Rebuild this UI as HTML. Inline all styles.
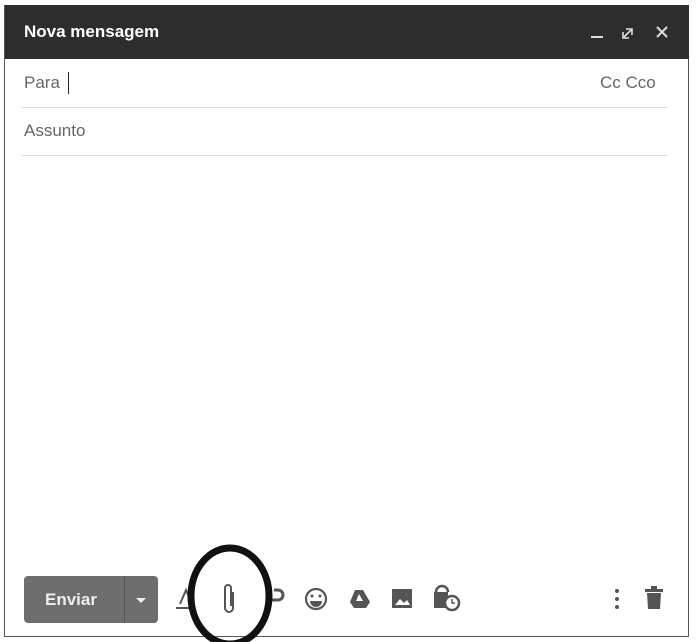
<!DOCTYPE html>
<html><head><style>
body{margin:0;width:699px;height:642px;background:#fff;position:relative;overflow:hidden;font-family:"Liberation Sans",Arial,sans-serif}
.box{position:absolute;left:4px;top:5px;width:685px;height:632px;border:1px solid #555;box-sizing:border-box}
.hdr{position:absolute;left:5px;top:5px;width:684px;height:54px;background:#2d2d2d}
.t{position:absolute;color:#fff;font-weight:bold;font-size:17px;left:24px;top:22px}
.g{position:absolute;color:#666;font-size:17px}
.line{position:absolute;left:22px;width:646px;height:1px;background:#ddd}
.btn{position:absolute;left:24px;top:576px;width:134px;height:47px;background:#6e6e6e;border-radius:4px}
</style></head><body>
<div class="box"></div>
<div class="hdr"></div>
<div class="t">Nova mensagem</div>
<svg style="position:absolute;left:585px;top:22px" width="90" height="20">
<line x1="6" y1="15" x2="18" y2="15" stroke="#ddd" stroke-width="2"/>
<path d="M38 16 L47 7 M41 7 H47 V13 M38 10 V16 H44" stroke="#ddd" stroke-width="1.6" fill="none"/>
<path d="M72 5 L82 15 M82 5 L72 15" stroke="#ddd" stroke-width="2"/>
</svg>
<div class="g" style="left:24px;top:73px">Para</div>
<div style="position:absolute;left:68px;top:72px;width:1px;height:22px;background:#222"></div>
<div class="g" style="left:600px;top:73px">Cc Cco</div>
<div class="line" style="top:107px"></div>
<div class="g" style="left:24px;top:121px">Assunto</div>
<div class="line" style="top:155px"></div>
<div class="btn"></div>
<div style="position:absolute;left:124px;top:576px;width:1px;height:47px;background:#555"></div>
<div style="position:absolute;left:45px;top:590px;color:#eee;font-weight:bold;font-size:17px">Enviar</div>
<svg style="position:absolute;left:0;top:540px" width="699" height="102">
<path d="M136 58 L146 58 L141 63 Z" fill="#eee"/>
<path d="M176 68 H192 M180 64 L186 50 L192 64" stroke="#555" stroke-width="2" fill="none"/>
<path d="M233 52 V68 a4 4 0 0 1 -8 0 V48 a3 3 0 0 1 6 0 V66" stroke="#555" stroke-width="2" fill="none"/>
<path d="M266 60 h12 a5 5 0 0 0 0 -10 h-4" stroke="#555" stroke-width="3" fill="none"/>
<circle cx="316" cy="59" r="10" stroke="#555" stroke-width="2.2" fill="none"/>
<circle cx="312" cy="56" r="1.5" fill="#555"/><circle cx="320" cy="56" r="1.5" fill="#555"/>
<path d="M310 61 h12 a6 6 0 0 1 -12 0z" fill="#555"/>
<path d="M355 50 h8 l7 12 -4 6 h-12 l-4 -6z" fill="#555"/><path d="M359 54 l4 7 h-7z" fill="#fff"/>
<rect x="392" y="49" width="20" height="19" fill="#555"/><path d="M395 65 l5-6 4 4 3-3 3 5z" fill="#fff"/>
<path d="M436 52 a6 6 0 0 1 12 0" stroke="#555" stroke-width="2.5" fill="none"/>
<rect x="434" y="52" width="14" height="16" fill="#555"/>
<circle cx="452" cy="63" r="7" fill="#fff" stroke="#555" stroke-width="2.5"/>
<path d="M452 59 v4 h3" stroke="#555" stroke-width="1.5" fill="none"/>
<circle cx="617" cy="51" r="2" fill="#555"/><circle cx="617" cy="59" r="2" fill="#555"/><circle cx="617" cy="67" r="2" fill="#555"/>
<rect x="645" y="49" width="18" height="3" fill="#555"/><rect x="651" y="46" width="6" height="3" fill="#555"/>
<path d="M647 53 h14 l-1 16 h-12z" fill="#555"/>
<ellipse cx="230" cy="56" rx="39" ry="48" stroke="#111" stroke-width="7" fill="none"/>
</svg>
</body></html>
